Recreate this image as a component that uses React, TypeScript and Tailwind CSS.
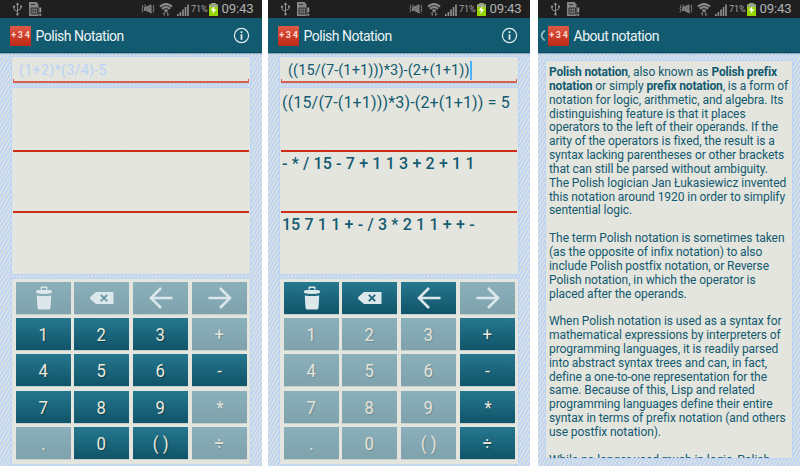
import React from "react";
import clsx from "clsx";

const ink = "text-[#125a70]";

function StatusBar() {
  return (
    <div className="flex h-[18px] shrink-0 items-center bg-[#1f1f1f] pl-[12px] text-[#a3a3a3]">
      <svg width="11" height="14" viewBox="0 0 11 14" fill="none" stroke="#8d8d8d" strokeWidth="1">
        <path d="M5.5 2v9M5.5 9.5L2 7.500V5M5.500 8.500L9 6.800V4.500" />
        <path d="M5.500 0.300L7.300 3H3.700zM5.500 13.500a1.300 1.300 0 1 0 0-2.600 1.300 1.300 0 0 0 0 2.600z" fill="#8d8d8d" stroke="none" />
        <circle cx="2" cy="4.800" r="1.200" fill="#8d8d8d" stroke="none" />
        <rect x="8" y="3.500" width="2" height="2" fill="#8d8d8d" stroke="none" />
      </svg>
      <svg className="ml-[6px]" width="13" height="14" viewBox="0 0 13 14">
        <path d="M0 0h7.500l2 2.500V14H0z" fill="#858585" />
        <path d="M2 6h6.500v6H2zM2 2.500h4" fill="none" stroke="#2a2a2a" strokeWidth="0.900" />
        <path d="M4.200 6v6M6.300 6v6M2 9h6.500" stroke="#2a2a2a" strokeWidth="0.600" />
        <path d="M10.300 5.500h1.900v5h-1.900zM10.300 11.700h1.900v2h-1.900z" fill="#9a9a9a" />
      </svg>
      <svg className="ml-[99px]" width="14" height="10" viewBox="0 0 14 10" fill="none" stroke="#858585" strokeWidth="1">
        <path d="M1 1l1 1.700-1 1.800 1 1.700-1 2M13 1l-1 1.700 1 1.800-1 1.700 1 2M3.500 0.500L11 9.500" />
        <path d="M3.500 3.200h2L10 .8v8L5.500 6.500h-2z" fill="#858585" fillOpacity=".8" />
      </svg>
      <svg className="ml-[4px]" width="14" height="13" viewBox="0 0 14 13">
        <path d="M1 3.600Q7-1.500 13 3.600M3 5.900Q7 2.500 11 5.900" fill="none" stroke="#8a8a8a" strokeWidth="2.200" />
        <path d="M4.700 7.200Q7 5.500 9.300 7.200L7 9.800z" fill="#8a8a8a" />
        <path d="M5.300 12.800V9.500L3.800 11M8.700 9V12.500L10.200 11" fill="none" stroke="#8a8a8a" strokeWidth="0.900" />
      </svg>
      <svg className="ml-[4px] mt-[1px]" width="12" height="12" viewBox="0 0 12 12" fill="#929292">
        <path d="M0 10h1.600v2H0zM2.600 8h1.600v4H2.600zM5.200 5.500h1.600V12H5.200zM7.700 3h1.600v9H7.700zM10.200.5h1.600V12h-1.600z" />
      </svg>
      <span className="ml-[2px] w-[17px] whitespace-nowrap text-[9px] leading-none tracking-[-0.100px]">71%</span>
      <svg className="ml-[1px]" width="9" height="13" viewBox="0 0 9 13">
        <path d="M2.500 0h4v1.500H9V13H0V1.500h2.500z" fill="#94d500" />
        <path d="M2.500 0h4v1.500H9V4H0V1.500h2.500z" fill="#9da38f" />
        <path d="M5.500 3L1.500 7.500h2.600L3.300 11l4.200-4.700H4.900z" fill="#fff" />
      </svg>
      <span className="ml-[3.500px] text-[13.200px] leading-none tracking-[-0.200px] text-[#b0b0b0]">09:43</span>
    </div>
  );
}

function Header({ title, back = false }: { title: string; back?: boolean }) {
  return (
    <div className="z-10 flex h-[35px] shrink-0 items-center border-b border-[#0c4a5e] bg-[#115a70] shadow-[0_1px_1px_rgba(30,80,110,0.35)]">
      <div className="flex w-[10px] shrink-0 pl-[2px]">
        {back && (
          <svg width="6" height="11" viewBox="0 0 6 11" fill="none" stroke="#9bbcc7" strokeWidth="1.700">
            <path d="M4.800 0.500Q1.500 3 1.500 5.500T4.800 10.500" />
          </svg>
        )}
      </div>
      <div className="mt-[1px] flex h-[20px] w-[21px] shrink-0 items-center justify-center whitespace-nowrap rounded-[1px] bg-linear-to-b from-[#dc5a47] via-[#cf3c28] to-[#bd2c19] text-[9px] font-bold text-[#f7d9d2]">
        <span className="pt-[1px] [word-spacing:-0.500px]">+ 3 4</span>
      </div>
      <span className="ml-[4.500px] whitespace-nowrap pt-[3px] text-[14px] tracking-[-0.500px] text-[#eef4f5]">{title}</span>
      {!back && (
        <svg className="ml-auto mr-[12px] mt-[1px]" width="17" height="17" viewBox="0 0 17 17">
          <circle cx="8.500" cy="8.500" r="7.100" fill="none" stroke="#e6eef0" strokeWidth="1.200" />
          <path d="M7.600 4.200h1.800v1.800H7.600zM7.600 7.200h1.800v5.500H7.600z" fill="#e6eef0" />
        </svg>
      )}
    </div>
  );
}

function Screen({ children }: { children: React.ReactNode }) {
  return <div className="flex h-[466px] w-[262px] shrink-0 flex-col overflow-hidden">{children}</div>;
}

const hatch =
  "bg-[repeating-linear-gradient(120deg,#bdd4f5_0px,#bdd4f5_1.300px,#e2e4de_1.900px,#e2e4de_2.500px,#bdd4f5_3.100px)]";
const panel = "border border-[#bcd5f6] bg-[#e8e7db]/86";

function TrashIcon() {
  return (
    <svg width="18" height="24" viewBox="0 0 18 24" fill="#dbe7eb">
      <path d="M5.500 3.500V1.200Q5.500.5 6.200.5h5.600q.7 0 .7.700v2.300h-1.500V2H7v1.500z" />
      <path d="M.7 6.800Q.7 4.200 3 4h12q2.300.2 2.300 2.800-4 1.300-8.300 1.300T.7 6.800z" />
      <path d="M1.800 9.500q7.200 1.200 14.400 0l-.7 12.400q-.2 1.600-2 1.600h-9q-1.800 0-2-1.600z" />
    </svg>
  );
}

function EraseIcon({ on }: { on: boolean }) {
  return (
    <svg className="ml-[1px]" width="24" height="12" viewBox="0 0 24 12">
      <path d="M6 0h17.500v12H6L.5 7.200q-.8-1.200 0-2.400z" fill="#dbe7eb" />
      <path d="M10.800 2.800l6.400 6.400M17.200 2.800l-6.400 6.400" stroke={on ? "#1d667b" : "#6d98a5"} strokeWidth="1.900" />
    </svg>
  );
}

function ArrowIcon({ right = false }: { right?: boolean }) {
  return (
    <svg className={right ? "rotate-180" : ""} width="24" height="22" viewBox="0 0 24 22" fill="none" stroke="#dbe7eb" strokeWidth="2.600">
      <path d="M1.800 11H23.500M12 1L2 11l10 10" />
    </svg>
  );
}

const keys = ["clear", "erase", "left", "right", "1", "2", "3", "+", "4", "5", "6", "-", "7", "8", "9", "*", ".", "0", "( )", "÷"];

function KeyFace({ id, on }: { id: string; on: boolean }) {
  switch (id) {
    case "clear":
      return <TrashIcon />;
    case "erase":
      return <EraseIcon on={on} />;
    case "left":
      return <ArrowIcon />;
    case "right":
      return <ArrowIcon right />;
    default:
      return <span className="scale-x-90 pt-[3px]">{id}</span>;
  }
}

function Keypad({ enabled }: { enabled: string[] }) {
  return (
    <div className={clsx(panel, "mt-[3px] h-[187px] shrink-0 pl-[4px] pt-[3px]")}>
      <div className="grid grid-cols-[58px_59px_59px_54px] grid-rows-[36px_36px_37px_36px_33px]">
        {keys.map((id) => (
          <div
            key={id}
            className={clsx(
              "flex h-[32px] w-[55px] items-center justify-center whitespace-nowrap text-[18.500px] shadow-[0_1px_0_#c2d0d0]",
              enabled.includes(id)
                ? "bg-linear-to-b from-[#25788f] to-[#105469] text-[#eeeade] [text-shadow:1px_1px_1px_rgba(0,30,40,0.5)]"
                : "bg-linear-to-b from-[#8ab0bb] to-[#7fa2ac] text-[#e6e3d8] [text-shadow:1px_1px_1px_rgba(70,100,110,0.4)]"
            )}
          >
            <KeyFace id={id} on={enabled.includes(id)} />
          </div>
        ))}
      </div>
    </div>
  );
}

interface CalculatorProps {
  input: React.ReactNode;
  infix?: React.ReactNode;
  prefix?: React.ReactNode;
  postfix?: React.ReactNode;
  enabled: string[];
}

function Calculator({ input, infix, prefix, postfix, enabled }: CalculatorProps) {
  return (
    <Screen>
      <StatusBar />
      <Header title="Polish Notation" />
      <div className={clsx(hatch, "flex flex-1 flex-col pl-[11px] pr-[11px] pt-[3px]")}>
        <div className={clsx(panel, "flex h-[28px] shrink-0 flex-col px-[1px]")}>
          <div className="flex h-[22px] items-center whitespace-nowrap pl-[6px] pt-[5px]">{input}</div>
          <div className="h-[4px] border-x border-b-2 border-[#d8604f]" />
        </div>
        <div className={clsx(panel, "mt-[3px] flex h-[188px] shrink-0 flex-col px-[1px]")}>
          <div className={clsx(ink, "h-[64px] whitespace-nowrap border-b-2 border-[#cd2c17] pl-[1px] pt-[3px]")}>{infix}</div>
          <div className={clsx(ink, "h-[61px] whitespace-nowrap border-b-2 border-[#cd2c17] pl-[1px]")}>{prefix}</div>
          <div className={clsx(ink, "whitespace-nowrap pl-[1px]")}>{postfix}</div>
        </div>
        <Keypad enabled={enabled} />
      </div>
    </Screen>
  );
}

const about: React.ReactNode[] = [
  <><b>Polish notation</b>, also known as <b>Polish prefix</b></>,
  <><b>notation</b> or simply <b>prefix notation</b>, is a form of</>,
  "notation for logic, arithmetic, and algebra. Its",
  "distinguishing feature is that it places",
  "operators to the left of their operands. If the",
  "arity of the operators is fixed, the result is a",
  "syntax lacking parentheses or other brackets",
  "that can still be parsed without ambiguity.",
  "The Polish logician Jan Łukasiewicz invented",
  "this notation around 1920 in order to simplify",
  "sentential logic.",
  "",
  "The term Polish notation is sometimes taken",
  "(as the opposite of infix notation) to also",
  "include Polish postfix notation, or Reverse",
  "Polish notation, in which the operator is",
  "placed after the operands.",
  "",
  "When Polish notation is used as a syntax for",
  "mathematical expressions by interpreters of",
  "programming languages, it is readily parsed",
  "into abstract syntax trees and can, in fact,",
  "define a one-to-one representation for the",
  "same. Because of this, Lisp and related",
  "programming languages define their entire",
  "syntax in terms of prefix notation (and others",
  "use postfix notation).",
  "",
  "While no longer used much in logic, Polish",
];

export default function App() {
  return (
    <div className="flex h-[466px] w-[800px] overflow-hidden bg-white font-['Roboto',sans-serif]">
      <Calculator
        input={<span className="text-[14.500px] tracking-[0.200px] text-[#b9d3f8]">(1+2)*(3/4)-5</span>}
        enabled={["1", "2", "3", "4", "5", "6", "-", "7", "8", "9", "0", "( )"]}
      />
      <div className="w-[6px] shrink-0" />
      <Calculator
        input={
          <>
            <span className={clsx(ink, "ml-[1px] text-[14.500px] tracking-[0.120px]")}>((15/(7-(1+1)))*3)-(2+(1+1))</span>
            <span className="-mt-[1px] h-[19px] w-[2px] shrink-0 bg-[#4fb0fa]" />
          </>
        }
        infix={<span className="text-[16px] tracking-[0.170px]">((15/(7-(1+1)))*3)-(2+(1+1)) = 5</span>}
        prefix={<span className="text-[16px] font-medium [word-spacing:0.300px]">- * / 15 - 7 + 1 1 3 + 2 + 1 1</span>}
        postfix={<span className="text-[16px] font-medium [word-spacing:0.300px]">15 7 1 1 + - / 3 * 2 1 1 + + -</span>}
        enabled={["clear", "erase", "left", "+", "-", "*", "÷"]}
      />
      <div className="w-[8px] shrink-0" />
      <Screen>
        <StatusBar />
        <Header title="About notation" back />
        <div className={clsx(hatch, "flex-1 px-[7px] pt-[7px]")}>
          <div className={clsx(panel, ink, "h-[399px] overflow-hidden pl-[3px] pt-[5px] text-[12px] leading-[13.850px]")}>
            {about.map((line, i) => (
              <div key={i} className="h-[13.850px] whitespace-nowrap tracking-[-0.070px] [&>b]:tracking-[-0.170px]">{line}</div>
            ))}
          </div>
        </div>
      </Screen>
    </div>
  );
}
